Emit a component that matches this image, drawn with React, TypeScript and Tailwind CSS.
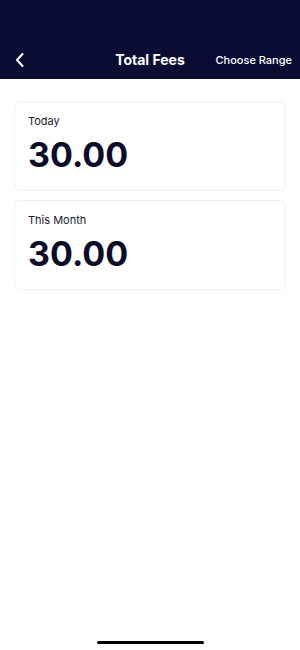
import React from 'react';

const FONT = { fontFamily: 'Inter, "Noto Sans", sans-serif' };

const stats = [
  { label: 'Today', value: '30.00' },
  { label: 'This Month', value: '30.00' },
];

export default function App() {
  return (
    <div className="w-[300px] h-[650px] bg-white flex flex-col relative overflow-hidden" style={FONT}>
      {/* Header */}
      <div className="h-[79px] bg-[#0a0c33] flex items-end pb-[9px] pl-[10px] pr-[8px] relative shrink-0">
        <button className="w-[20px] h-[20px] flex items-center justify-center text-white">
          <svg width="12" height="16" viewBox="0 0 12 16" fill="none">
            <path d="M8.5 2L3 8l5.5 6" stroke="currentColor" strokeWidth="2" strokeLinecap="round" strokeLinejoin="round" />
          </svg>
        </button>
        <div className="absolute left-0 right-0 bottom-[9px] flex justify-center pointer-events-none">
          <span className="text-white text-[14px] font-bold leading-[20px]">Total Fees</span>
        </div>
        <span className="ml-auto text-white text-[11px] font-medium leading-[20px]">Choose Range</span>
      </div>

      {/* Cards */}
      <div className="flex flex-col gap-[9px] px-[14px] pt-[22px]">
        {stats.map(s => (
          <div key={s.label} className="h-[90px] rounded-[6px] border border-[#f0f0f2] bg-white px-[13px] pt-[12px]">
            <div className="text-[11px] text-[#1a1a2a] leading-[14px]">{s.label}</div>
            <div className="text-[34px] font-bold text-[#0a0c2a] leading-[40px] mt-[7px]">{s.value}</div>
          </div>
        ))}
      </div>

      {/* Home indicator */}
      <div className="absolute bottom-[6px] left-0 right-0 flex justify-center">
        <div className="w-[107px] h-[3px] rounded-full bg-black" />
      </div>
    </div>
  );
}
